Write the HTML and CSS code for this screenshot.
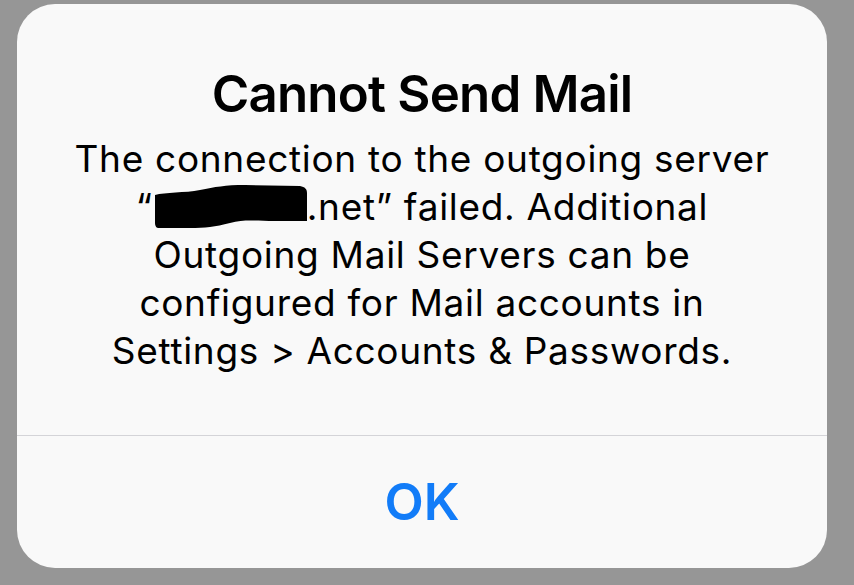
FILE: index.html
```html
<!DOCTYPE html>
<html lang="en">
<head>
<meta charset="utf-8">
<title>Cannot Send Mail</title>
<link rel="stylesheet" href="styles.css">
</head>
<body>
<div class="alert">
  <div class="alert-content">
    <h1 class="alert-title">Cannot Send Mail</h1>
    <p class="alert-message">The connection to the outgoing server<br>“<span class="redacted"><svg class="redacted-blob" viewBox="0 0 152 43" width="152" height="43" aria-hidden="true"><path d="M0,10 C10,7 30,8 45,5 C60,2 70,0 90,0 L145,1 C150,2 152,4 152,8 L152,36 L120,36 C100,36 90,34 75,38 C60,42 50,43 35,43 L3,43 C1,43 0,40 0,38 Z" fill="#000"/></svg></span>.net” failed. Additional<br>Outgoing Mail Servers can be<br>configured for Mail accounts in<br>Settings &gt; Accounts &amp; Passwords.</p>
  </div>
  <div class="alert-actions">
    <button class="alert-button" type="button">OK</button>
  </div>
</div>
</body>
</html>
```

FILE: styles.css
```css
html, body {
  margin: 0;
  padding: 0;
}

body {
  background: #969696;
  width: 854px;
  height: 585px;
  overflow: hidden;
  font-family: Inter, "Noto Sans", "Liberation Sans", sans-serif;
  color: #000;
  padding-top: 4px;
  box-sizing: border-box;
}

.alert {
  margin-left: 17px;
  width: 810px;
  height: 564px;
  background: #f9f9f9;
  border-radius: 38px;
  display: flex;
  flex-direction: column;
  overflow: hidden;
}

.alert-content {
  height: 432px;
  padding-top: 59.5px;
  box-sizing: border-box;
  border-bottom: 1px solid #d4d4d8;
  text-align: center;
}

.alert-title {
  margin: 0;
  font-size: 51px;
  line-height: 60px;
  font-weight: 600;
  letter-spacing: -0.8px;
}

.alert-message {
  margin: 11px 0 0;
  font-size: 37px;
  line-height: 48px;
  font-weight: 400;
  letter-spacing: 0.7px;
}

.redacted {
  position: relative;
  display: inline-block;
  width: 152px;
  height: 0;
  margin-left: 2px;
}

.redacted-blob {
  position: absolute;
  left: 0;
  top: -35px;
}

.alert-actions {
  flex: 1;
  display: flex;
  align-items: center;
  justify-content: center;
}

.alert-button {
  border: 0;
  background: none;
  padding: 0;
  font-family: inherit;
  font-size: 51px;
  line-height: 60px;
  font-weight: 600;
  color: #127cf8;
}
```
